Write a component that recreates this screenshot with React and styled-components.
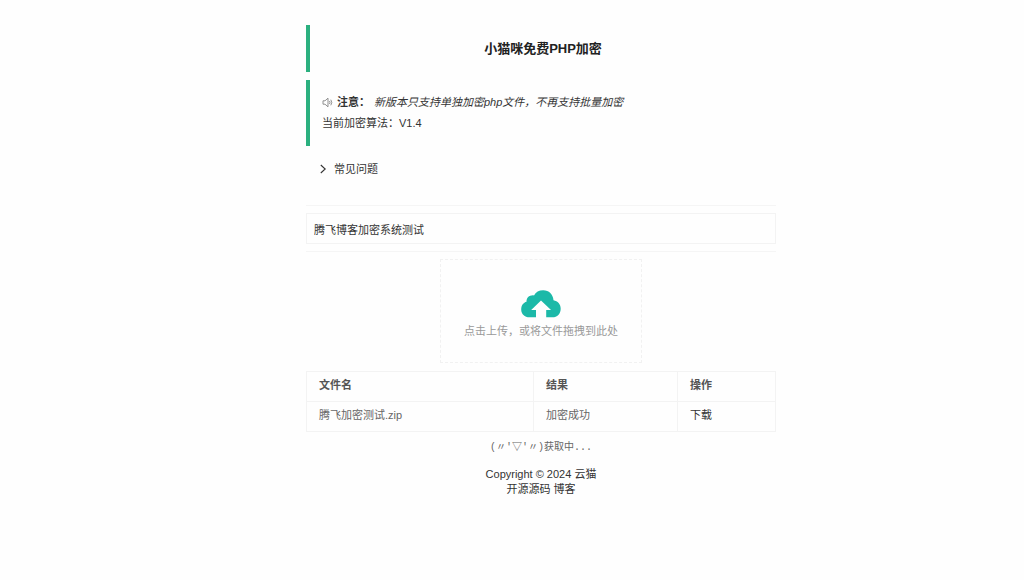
import React, { useState } from "react";
import styled, { createGlobalStyle } from "styled-components";

const files = [{ name: "腾飞加密测试.zip", result: "加密成功" }];

function App() {
  const [remark, setRemark] = useState("腾飞博客加密系统测试");
  const [open, setOpen] = useState(false);

  return (
    <>
      <GlobalStyle />
      <Page>
        <Main>
          <Quote>
            <Title>小猫咪免费PHP加密</Title>
          </Quote>

          <Notice>
            <NoticeLine>
              <SpeakerIcon />
              <strong>注意：</strong>
              <em>新版本只支持单独加密php文件，不再支持批量加密</em>
            </NoticeLine>
            <NoticeLine>当前加密算法：V1.4</NoticeLine>
          </Notice>

          <CollapseButton
            type="button"
            aria-expanded={open}
            onClick={() => setOpen(!open)}
          >
            <Chevron $open={open} viewBox="0 0 10 10" aria-hidden="true">
              <path d="M2.8 1 7.2 5 2.8 9" />
            </Chevron>
            常见问题
          </CollapseButton>

          <Divider />
          <RemarkInput
            type="text"
            aria-label="备注"
            value={remark}
            onChange={(e) => setRemark(e.target.value)}
          />
          <Divider />

          <UploadButton type="button">
            <CloudIcon viewBox="0 0 40 28" aria-hidden="true">
              <path d="M8.500 27.300C3.600 27.300 0.200 24 0.200 19.500c0-4.200 2.400-7 5.300-7.700C5.300 7.800 8.500 4.800 13 5.400 14.700 2.200 18 0.300 22.200 0.300c5.800 0 9.800 4 10.300 10 4.200 0.800 7.200 4 7.200 8.400 0 5-3.500 8.600-8.200 8.600H25.200V20H30L20 10.500 10.200 20H15v7.300z" />
            </CloudIcon>
            <span>点击上传，或将文件拖拽到此处</span>
          </UploadButton>

          <Table>
            <colgroup>
              <NameCol />
              <ResultCol />
              <col />
            </colgroup>
            <thead>
              <tr>
                <th>文件名</th>
                <th>结果</th>
                <th>操作</th>
              </tr>
            </thead>
            <tbody>
              {files.map((file) => (
                <tr key={file.name}>
                  <td>{file.name}</td>
                  <td>{file.result}</td>
                  <td>
                    <Link href="#download">下载</Link>
                  </td>
                </tr>
              ))}
            </tbody>
          </Table>

          <Hitokoto>(〃'▽'〃)获取中...</Hitokoto>

          <Footer>
            <div>
              Copyright © 2024 <Link href="#home">云猫</Link>
            </div>
            <div>
              <Link href="#source">开源源码</Link> <Link href="#blog">博客</Link>
            </div>
          </Footer>
        </Main>
      </Page>
    </>
  );
}

function SpeakerIcon() {
  return (
    <Speaker viewBox="0 0 11 11" aria-hidden="true">
      <path d="M1 3.800h2L6 1.200v8.600L3 7.200H1z" />
      <path d="M7.500 4q1 1.500 0 3" />
      <path d="M8.800 2.700q2 2.800 0 5.600" />
    </Speaker>
  );
}

const GlobalStyle = createGlobalStyle`
  *, *::before, *::after {
    box-sizing: border-box;
  }

  body {
    margin: 0;
    background: #fefefe;
    color: #333;
    font: 11px/15px "Liberation Sans", "Noto Sans CJK SC", sans-serif;
  }

  button, input {
    font: inherit;
    color: inherit;
  }
`;

const Page = styled.div`
  display: grid;
  grid-template-columns: 306fr 470fr 248fr;
  padding: 25px 0;
`;

const Main = styled.main`
  grid-column: 2;
  min-width: 0;
  display: flex;
  flex-direction: column;
`;

const Quote = styled.section`
  margin-bottom: 8px;
  padding: 12px;
  border-left: 4px solid #2bb07f;
  line-height: 21px;
`;

const Title = styled.h1`
  margin: 0;
  font-size: 13px;
  line-height: 23px;
  text-align: center;
  color: #222;
`;

const Notice = styled(Quote)`
  margin-bottom: 12px;
`;

const NoticeLine = styled.div`
  display: flex;
  align-items: center;
  gap: 4px;
`;

const Speaker = styled.svg`
  width: 11px;
  height: 11px;
  fill: none;
  stroke: #777;
  stroke-width: 0.8;
`;

const CollapseButton = styled.button`
  display: flex;
  align-items: center;
  gap: 6px;
  height: 22px;
  margin-bottom: 25px;
  padding: 0 12px;
  border: 0;
  background: none;
  cursor: pointer;
`;

const Chevron = styled.svg`
  width: 10px;
  height: 10px;
  fill: none;
  stroke: #333;
  stroke-width: 1.1;
  transform: rotate(${(props) => (props.$open ? 90 : 0)}deg);
`;

const Divider = styled.hr`
  width: 100%;
  margin: 0;
  border: 0;
  border-top: 1px solid #f5f5f5;
`;

const RemarkInput = styled.input`
  width: 100%;
  height: 31px;
  margin: 7px 0;
  padding: 0 7px;
  border: 1px solid #f3f3f3;
  background: #fefefe;
`;

const UploadButton = styled.button`
  align-self: center;
  display: flex;
  flex-direction: column;
  align-items: center;
  gap: 6px;
  margin: 7px 0 8px;
  padding: 30px 23px 23px;
  border: 1px dashed #f1f1f1;
  background: #fefefe;
  color: #999;
  cursor: pointer;
`;

const CloudIcon = styled.svg`
  width: 40px;
  height: 28px;
  fill: #1cb9a8;
`;

const Table = styled.table`
  width: 100%;
  table-layout: fixed;
  border-collapse: collapse;
  color: #666;

  th,
  td {
    height: 30px;
    padding: 0 12px 2px;
    border: 1px solid #f3f3f3;
    text-align: left;
  }

  th {
    color: #555;
  }
`;

const NameCol = styled.col`
  width: 227px;
`;

const ResultCol = styled.col`
  width: 144px;
`;

const Link = styled.a`
  color: #333;
  text-decoration: none;
`;

const Hitokoto = styled.p`
  margin: 8px 0 12px;
  font: 10px/15px "Liberation Mono", "Noto Sans CJK SC", monospace;
  text-align: center;
  color: #666;
`;

const Footer = styled.footer`
  text-align: center;
`;

export default App;
